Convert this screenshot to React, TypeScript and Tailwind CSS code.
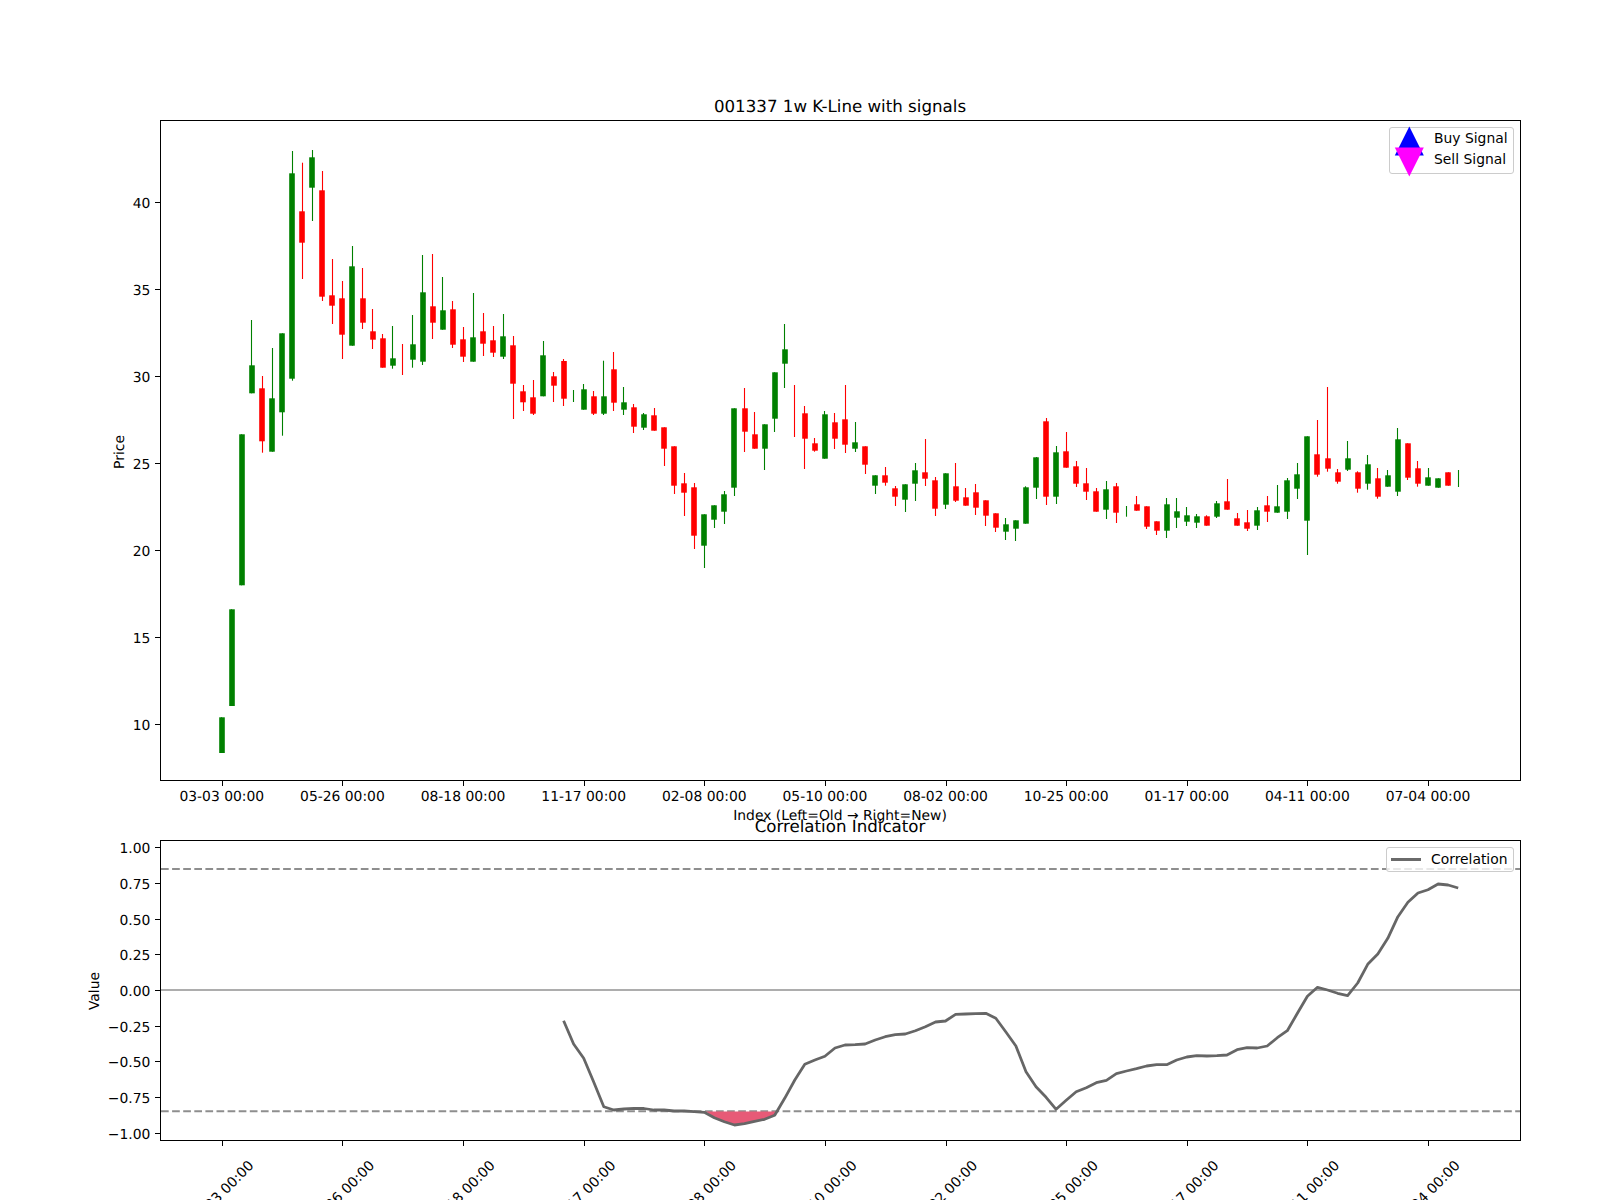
const X = (i: number) => 221.8 + 10.052 * i;

type C = [number, number, number, number, 'g' | 'r'];
const candles: C[] = [
  [717.3,717.3,753,753,'g'],[609.3,609.3,706,706,'g'],[434.3,434.3,585.3,585.3,'g'],[320,365.3,393.3,393.3,'g'],
  [376,388.3,441.3,452.7,'r'],[348,398.3,451.7,451.7,'g'],[333.3,333.3,412.3,435.7,'g'],[151,173.3,378.7,380.7,'g'],
  [162.7,211.3,242.7,279,'r'],[150,157.3,187.7,221,'g'],[171,190.3,296.7,301,'r'],[259,295.3,305.7,324,'r'],
  [281,298.3,334.7,359,'r'],[246,266.3,345.7,345.7,'g'],[268,298.3,322.7,329,'r'],[309,331.3,339.7,349,'r'],
  [334,338.3,367.7,367.7,'r'],[326,358.3,365.7,368.7,'g'],[344,360,360,375,'r'],[315,344.3,359.7,367.7,'g'],
  [255,292.3,361.7,365,'g'],[254,306.3,322.7,339,'r'],[277,310.3,329.7,329.7,'g'],[301,309.3,344.7,348,'r'],
  [327,339.3,356.7,362,'r'],[293,337.3,361.7,361.7,'g'],[313,331.3,343.7,356,'r'],[326,340.3,352.7,357,'r'],
  [314,336.3,356.7,359,'g'],[336,345.3,383.7,419,'r'],[385,391.3,402.3,411,'r'],[380,397.3,413.7,415,'r'],
  [341,355.3,396.3,396.3,'g'],[372,376.3,385.7,402,'r'],[359,361,398.7,406,'r'],[390,396,396,402,'g'],
  [384,389.3,409.7,409.7,'g'],[391,396.3,413.7,415,'r'],[360.7,396.3,413.7,415,'g'],[352,369.3,402.7,411,'r'],
  [387,402.3,409.7,415,'g'],[404,407.3,426.7,433,'r'],[413,414.3,427.7,430,'g'],[408,415.3,430.7,430.7,'r'],
  [427.3,427.3,448.7,466,'r'],[446.3,446.3,485.7,494,'r'],[473,483.3,492.7,516,'r'],[483,487.3,535.7,549,'r'],
  [514.3,514.3,545.7,568,'g'],[505.3,505.3,519.7,528,'g'],[491,494.3,511.7,524,'g'],[408.3,408.3,487.7,496,'g'],
  [388,408.3,431.7,452,'r'],[412,434.3,448.7,448.7,'r'],[424.3,424.3,448.7,470,'g'],[372.3,372.3,418.7,432,'g'],
  [324,349.3,363.7,388,'g'],[385,410,410,437,'r'],[406,413.3,438.7,469,'r'],[438,443.3,450.7,451.7,'r'],
  [411,414.3,458.7,458.7,'g'],[413,422.3,438.7,449,'r'],[385,419.3,444.7,453,'r'],[422,442.3,448.7,452,'g'],
  [446.3,446.3,464.7,474,'r'],[475.3,475.3,485.7,494,'g'],[467,475.3,482.7,485.7,'r'],[486,488.3,496.7,506,'r'],
  [484.3,484.3,499.7,512,'g'],[463,470.3,483.7,501,'g'],[439,472.3,478.7,486,'r'],[477,480.3,508.7,516,'r'],
  [473.3,473.3,504.7,509,'g'],[463,486.3,500.7,502,'r'],[488,497.3,505.7,505.7,'r'],[484,492.3,507.7,515,'r'],
  [500.3,500.3,515.7,526,'r'],[513.3,513.3,527.7,532,'r'],[518,524.3,531.7,540,'g'],[520.3,520.3,528.7,541,'g'],
  [486.3,487.3,523.7,523.7,'g'],[457,457.3,487.7,499,'g'],[418,421.3,496.7,505,'r'],[446,452.3,496.7,504,'g'],
  [432,451.3,467.7,467.7,'r'],[461,466.3,483.7,487,'r'],[468,483.3,491.7,500,'r'],[488,491.3,511.7,511.7,'r'],
  [481,489.3,509.7,519,'g'],[483,486.3,512.7,523,'r'],[506,511,511,516.7,'g'],[496,504.3,510.7,510.7,'r'],
  [506.3,506.3,526.7,529,'r'],[521.3,521.3,530.7,535,'r'],[498,504.3,530.7,538,'g'],[498,511.3,517.7,528,'g'],
  [507,515.3,521.7,526,'g'],[514,516.3,522.7,528,'g'],[515.3,516.3,525.7,525.7,'r'],[501,503.3,516.7,518,'g'],
  [479,501.3,509.7,509.7,'r'],[513,518.3,525.7,525.7,'r'],[510,522.3,528.7,531,'r'],[507,510.3,525.7,530,'g'],
  [496,505.3,511.7,522,'r'],[485,506.3,512.7,512.7,'g'],[478,480.3,511.7,519,'g'],[463,474.3,488.7,499,'g'],
  [436.3,436.3,520.7,555,'g'],[420,454.3,474.7,476.7,'r'],[387,458.3,468.7,471.7,'r'],[469,472.3,481.7,483.7,'r'],
  [441,458.3,469.7,471,'g'],[471.3,472.3,488.7,492.7,'r'],[455,464.3,483.7,489.7,'g'],[468,478.3,496.7,498.7,'r'],
  [470,475.3,486.7,486.7,'g'],[428,439.3,491.7,496,'g'],[443.3,443.3,477.7,480,'r'],[461,468.3,483.7,486.7,'r'],
  [468,477.3,485.7,485.7,'g'],[478.3,478.3,487.7,487.7,'g'],[472.3,472.3,485.7,485.7,'r'],[470,478,478,487,'g'],
];

const corr: number[] = [
  1020.7,1044,1058.3,1082,1106.7,1110,1109,1108.3,1108.5,1110,1110,1111,1111,1111.7,1112.3,1117.7,1121.7,1125,1123.7,1121.3,1119.3,1115.3,
  1098.3,1080,1064.3,1060,1056.3,1048,1045,1044.7,1044,1040,1036.7,1034.7,1034,1030.7,1026.7,1022,1021,1014.3,1014,1013.7,1013.3,1018.3,
  1032,1046,1071.7,1086.7,1097.3,1109.3,1100.3,1091.7,1087.7,1082.7,1080.3,1073.7,1071,1068.7,1066,1064.7,1064.7,1060,1057,1055.7,1056,
  1055.7,1055,1049.7,1047.7,1048,1046,1037.7,1030.7,1013.3,996.3,987.3,990,993.3,995.7,983,964.3,954,938.3,916.7,902.3,893,889.7,884,885,888,
];
const corrStart = 34;
const corrPts = corr.map((y, k) => `${X(k + corrStart).toFixed(1)},${y}`).join(' ');
const fillPts =
  '706,1111.4 ' +
  corr.slice(49 - corrStart, 56 - corrStart).map((y, k) => `${X(k + 49).toFixed(1)},${y}`).join(' ') +
  ' 776,1111.4';

const tickNames = ['03-03', '05-26', '08-18', '11-17', '02-08', '05-10', '08-02', '10-25', '01-17', '04-11', '07-04'];
const ticks = tickNames.map((n, k) => ({ x: Math.round(X(12 * k)) + 0.5, label: `${n} 00:00`, cx: X(12 * k) }));

const priceTicks = [40, 35, 30, 25, 20, 15, 10].map((p) => ({ label: String(p), y: Math.round(202.3 + (40 - p) * 17.4) + 0.5 }));
const valueTicks = [1, 0.75, 0.5, 0.25, 0, -0.25, -0.5, -0.75, -1].map((v) => ({
  label: (v < 0 ? '\u2212' : '') + Math.abs(v).toFixed(2),
  y: Math.round(990 - 142.86 * v) + 0.5,
}));

function Canvas({ left, top, children }: { left: number; top: number; children: React.ReactNode }) {
  return (
    <svg width={1600} height={1200} viewBox="0 0 1600 1200" className="absolute overflow-visible" textRendering="geometricPrecision" style={{ left: -left, top: -top }}>
      {children}
    </svg>
  );
}

const txt = { fontSize: 13.89, fill: '#000' };

export default function App() {
  return (
    <div className="relative w-[1600px] h-[1200px] overflow-hidden bg-white pt-[120px] pl-[160px] font-['DejaVu_Sans',sans-serif] text-black">
      {/* Price axes */}
      <div className="relative w-[1361px] h-[661px] border border-black">
        <Canvas left={161} top={121}>
          <text x={840} y={112} textAnchor="middle" fontSize={16.67}>001337 1w K-Line with signals</text>
          <text x={840} y={820} textAnchor="middle" {...txt}>Index (Left=Old → Right=New)</text>
          <text transform="translate(124 452) rotate(-90)" textAnchor="middle" {...txt}>Price</text>
          {priceTicks.map((t) => (
            <g key={t.label}>
              <line x1={155} x2={160} y1={t.y} y2={t.y} stroke="#000" strokeWidth={1} />
              <text x={150.3} y={t.y + 5} textAnchor="end" {...txt}>{t.label}</text>
            </g>
          ))}
          {ticks.map((t) => (
            <g key={t.label}>
              <line x1={t.x} x2={t.x} y1={781} y2={786} stroke="#000" strokeWidth={1} />
              <text x={t.cx} y={801} textAnchor="middle" {...txt}>{t.label}</text>
            </g>
          ))}
          {candles.map(([wt, bt, bb, wb, c], i) => {
            const col = c === 'g' ? '#008000' : '#ff0000';
            const x = X(i);
            const wx = Math.floor(x) + 0.5;
            const bx = Math.round(x) - 2.8;
            return (
              <g key={i}>
                {wb > wt && <line x1={wx} x2={wx} y1={wt} y2={wb} stroke={col} strokeWidth={1.1} />}
                {bb > bt && <rect x={bx} y={bt} width={5.6} height={bb - bt} fill={col} />}
              </g>
            );
          })}
        </Canvas>
        <div className="absolute top-[6px] right-[6px] w-[125px] h-[47px] rounded-[3px] border border-[#cccccc] bg-white/80 pl-[44px] text-[13.89px] leading-[21px]">
          <div>Buy Signal</div>
          <div>Sell Signal</div>
          <svg width={40} height={60} viewBox="0 0 40 60" className="absolute left-[1px] top-[-1px] overflow-visible">
            <polygon points="18.3,-0.5 3.8,28.5 32.8,28.5" fill="#0000ff" />
            <polygon points="3.8,20.5 32.8,20.5 18.3,49.5" fill="#ff00ff" />
          </svg>
        </div>
      </div>

      {/* Correlation axes */}
      <div className="relative mt-[59px] w-[1361px] h-[301px] border border-black">
        <Canvas left={161} top={841}>
          <text x={840} y={832} textAnchor="middle" fontSize={16.67}>Correlation Indicator</text>
          <text transform="translate(99 991) rotate(-90)" textAnchor="middle" {...txt}>Value</text>
          {valueTicks.map((t) => (
            <g key={t.label}>
              <line x1={155} x2={160} y1={t.y} y2={t.y} stroke="#000" strokeWidth={1} />
              <text x={150.3} y={t.y + 5} textAnchor="end" {...txt}>{t.label}</text>
            </g>
          ))}
          {ticks.map((t) => (
            <g key={t.label}>
              <line x1={t.x} x2={t.x} y1={1141} y2={1146} stroke="#000" strokeWidth={1} />
              <text transform={`translate(${t.cx} 1193.5) rotate(-45)`} textAnchor="middle" dominantBaseline="central" {...txt}>{t.label}</text>
            </g>
          ))}
          <line x1={161} x2={1520} y1={868.9} y2={868.9} stroke="#8e8e8e" strokeWidth={2} strokeDasharray="7.7 3.4" />
          <line x1={161} x2={1520} y1={1111.3} y2={1111.3} stroke="#8e8e8e" strokeWidth={2} strokeDasharray="7.7 3.4" />
          <line x1={161} x2={1520} y1={990} y2={990} stroke="#adadad" strokeWidth={2} />
          <polygon points={fillPts} fill="#e75a77" />
          <polyline points={corrPts} fill="none" stroke="#666666" strokeWidth={2.78} strokeLinejoin="round" />
        </Canvas>
        <div className="absolute top-[6px] right-[6px] w-[128px] h-[25px] flex items-center gap-[10px] rounded-[3px] border border-[#cccccc] bg-white/80 pl-[4px] text-[13.89px] leading-[21px]">
          <div className="w-[30px] h-[3px] bg-[#6a6a6a]" />
          <span>Correlation</span>
        </div>
      </div>
    </div>
  );
}
